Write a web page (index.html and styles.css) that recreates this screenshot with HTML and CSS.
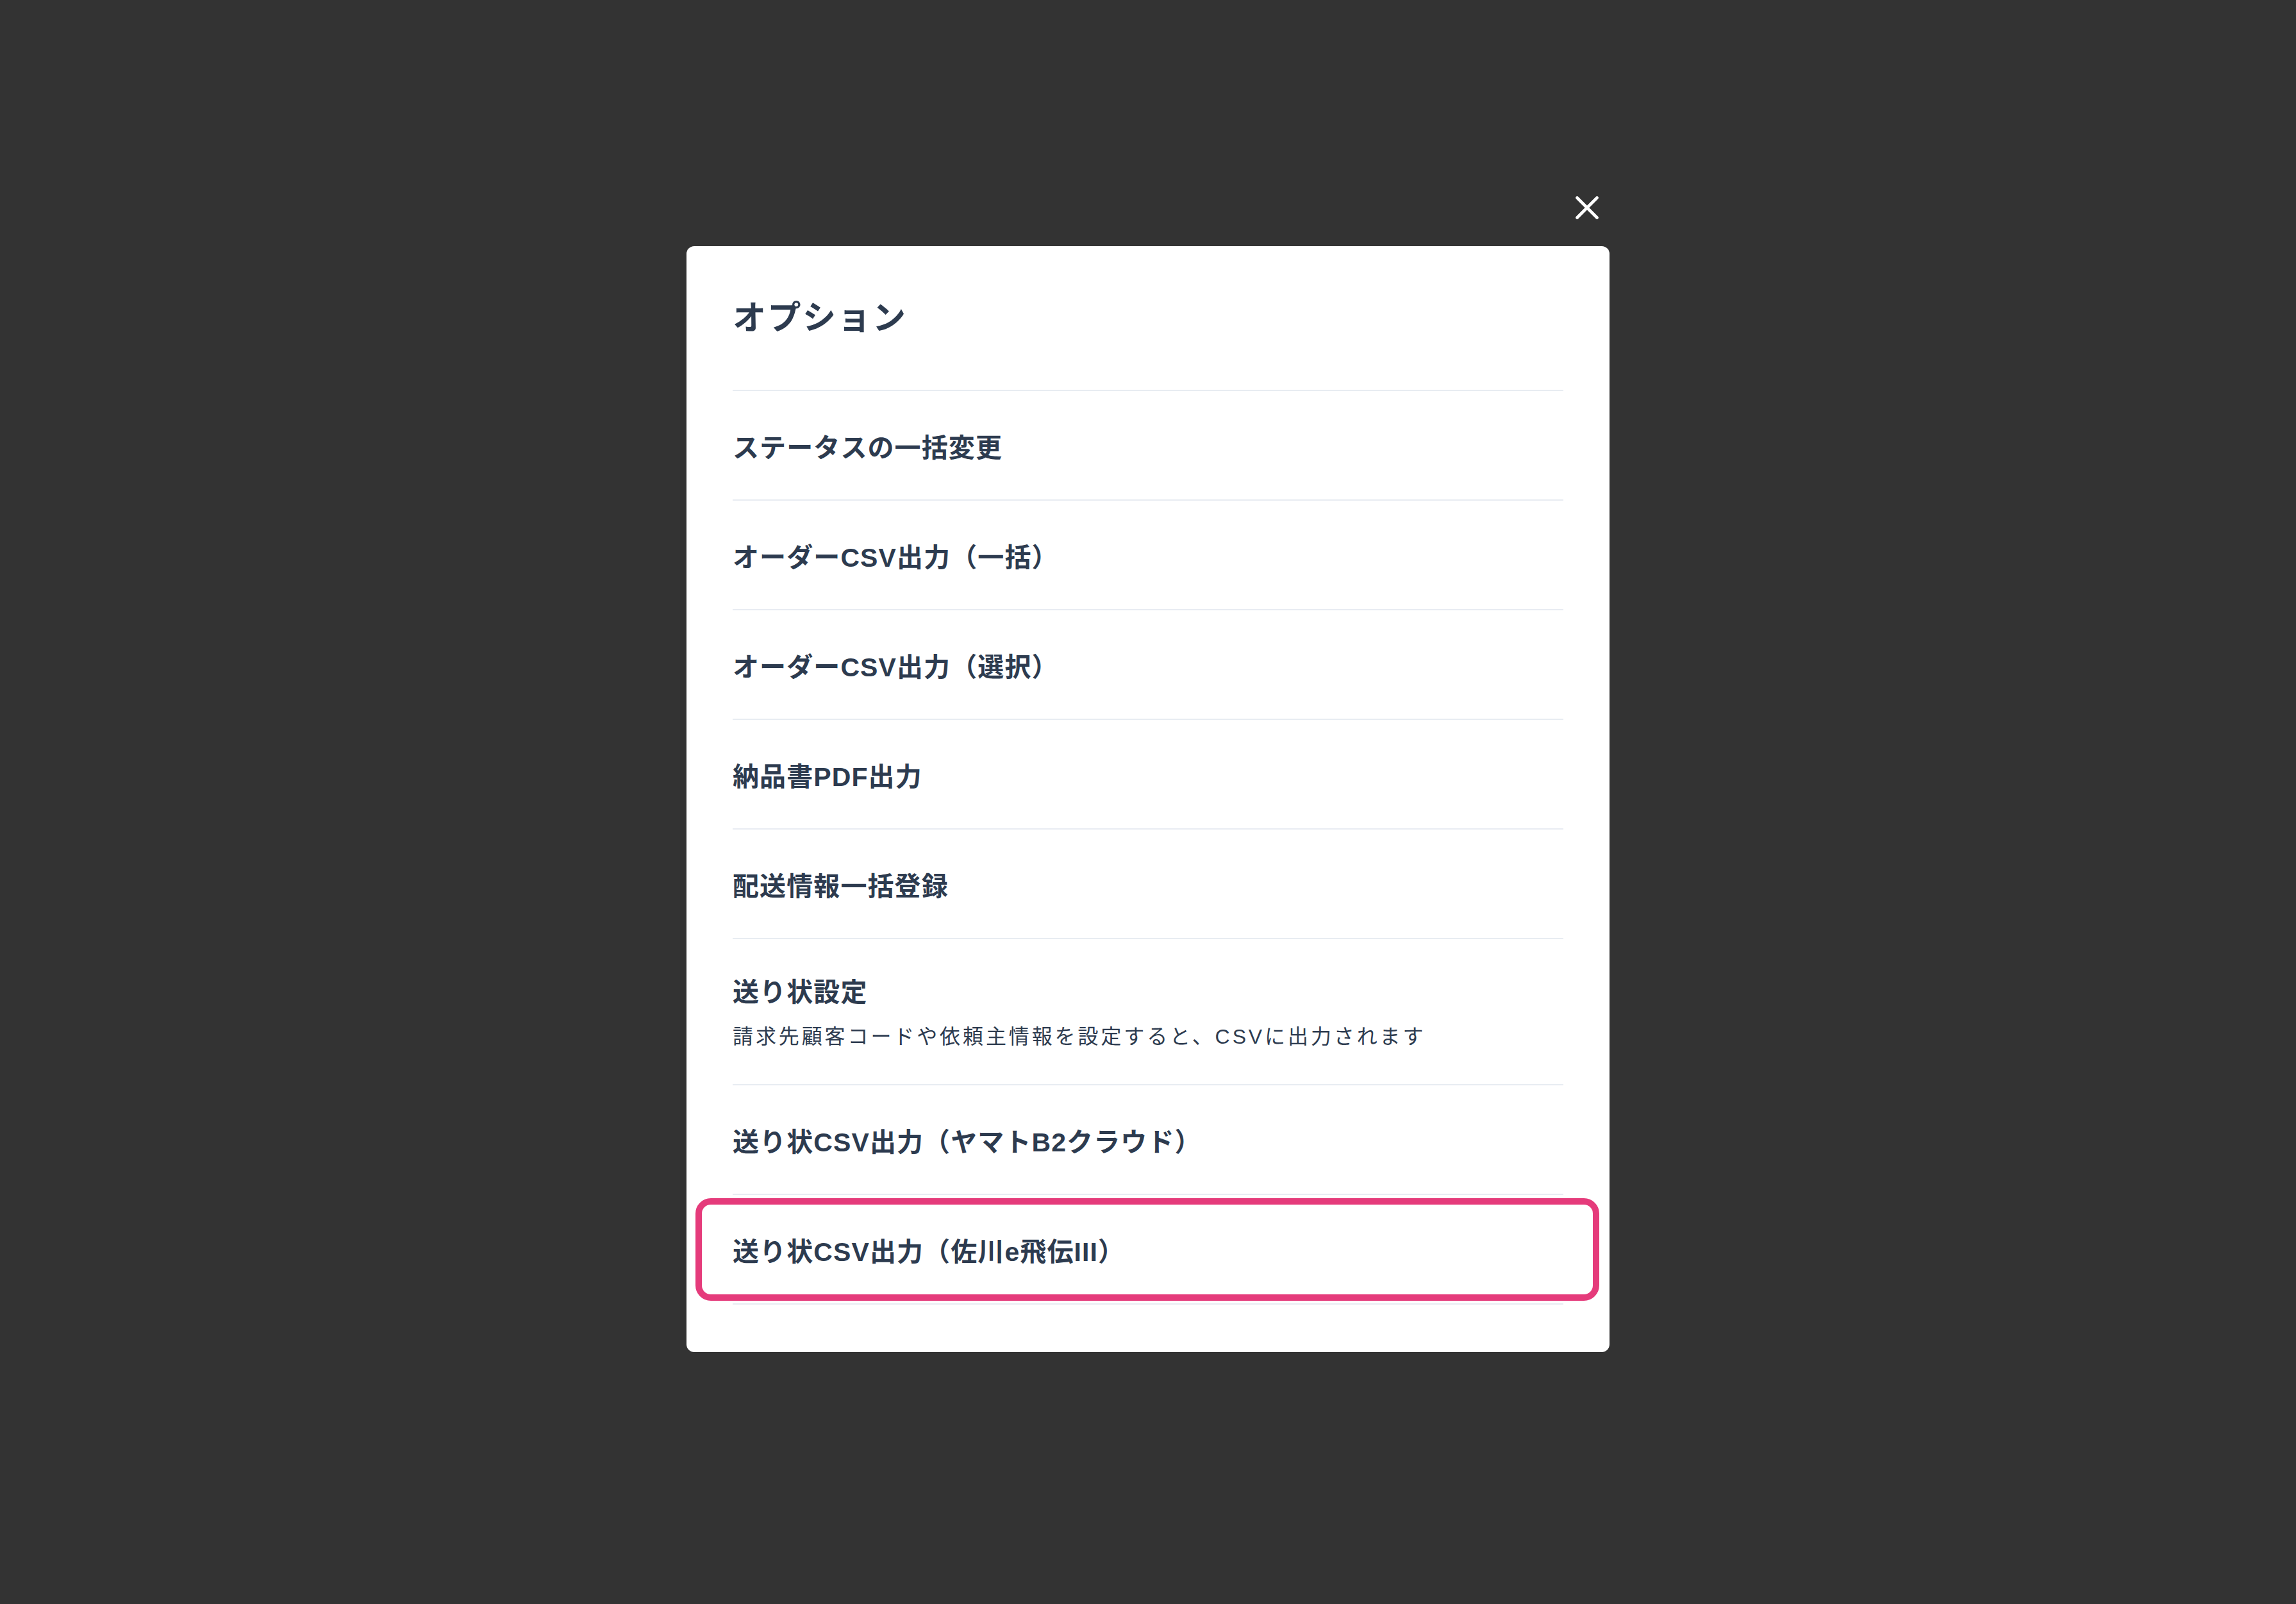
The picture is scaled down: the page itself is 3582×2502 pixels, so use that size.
FILE: index.html
```html
<!DOCTYPE html>
<html lang="ja">
<head>
<meta charset="utf-8">
<title>オプション</title>
<link rel="stylesheet" href="styles.css">
</head>
<body>
  <div class="modal">
    <button class="close" aria-label="閉じる">
      <svg viewBox="0 0 36 36" width="36" height="36">
        <path d="M2.5 2.5 L33.5 33.5 M33.5 2.5 L2.5 33.5" stroke="#ffffff" stroke-width="4.6" stroke-linecap="round" fill="none"/>
      </svg>
    </button>
    <h1 class="title">オプション</h1>
    <ul class="list">
      <li class="item">ステータスの一括変更</li>
      <li class="item">オーダーCSV出力（一括）</li>
      <li class="item">オーダーCSV出力（選択）</li>
      <li class="item">納品書PDF出力</li>
      <li class="item">配送情報一括登録</li>
      <li class="item item-desc">
        <span class="item-label">送り状設定</span>
        <span class="item-sub">請求先顧客コードや依頼主情報を設定すると、CSVに出力されます</span>
      </li>
      <li class="item">送り状CSV出力（ヤマトB2クラウド）</li>
      <li class="item item-highlight">送り状CSV出力（佐川e飛伝III）</li>
    </ul>
  </div>
</body>
</html>
```

FILE: styles.css
```css
html, body {
  margin: 0;
  padding: 0;
}

body {
  background: #333333;
  width: 3582px;
  height: 2502px;
  padding-top: 384px;
  box-sizing: border-box;
  font-family: "Liberation Sans", "Noto Sans CJK JP", sans-serif;
  color: #2d3b4f;
}

.modal {
  position: relative;
  width: 1440px;
  margin: 0 auto;
  box-sizing: border-box;
  background: #ffffff;
  border-radius: 12px;
  padding: 72px 72px 74px;
}

.close {
  position: absolute;
  top: -78px;
  right: 17px;
  width: 36px;
  height: 36px;
  padding: 0;
  border: 0;
  background: transparent;
  display: block;
}

.close svg {
  display: block;
}

.title {
  margin: 0 0 74px;
  padding-top: 2px;
  font-size: 52px;
  line-height: 76px;
  font-weight: 700;
  letter-spacing: 2.5px;
}

.list {
  list-style: none;
  margin: 0;
  padding: 0;
  border-bottom: 2px solid #e8ecf2;
}

.item {
  position: relative;
  border-top: 2px solid #e8ecf2;
  height: 160px;
  padding-top: 9px;
  box-sizing: content-box;
  display: flex;
  align-items: center;
  font-size: 41px;
  font-weight: 700;
  line-height: 61px;
  letter-spacing: 1.1px;
}

.item-desc {
  height: 226px;
  padding-top: 0;
  flex-direction: column;
  align-items: flex-start;
  justify-content: flex-start;
}

.item-label {
  display: block;
  margin-top: 53px;
}

.item-sub {
  display: block;
  margin-top: 14px;
  font-size: 32px;
  line-height: 48px;
  font-weight: 400;
  letter-spacing: 3.9px;
}

.item-highlight::after {
  content: "";
  position: absolute;
  left: -58px;
  right: -56px;
  top: 5px;
  bottom: 4px;
  border: 10px solid #e53b7b;
  border-radius: 24px;
  pointer-events: none;
}
```
